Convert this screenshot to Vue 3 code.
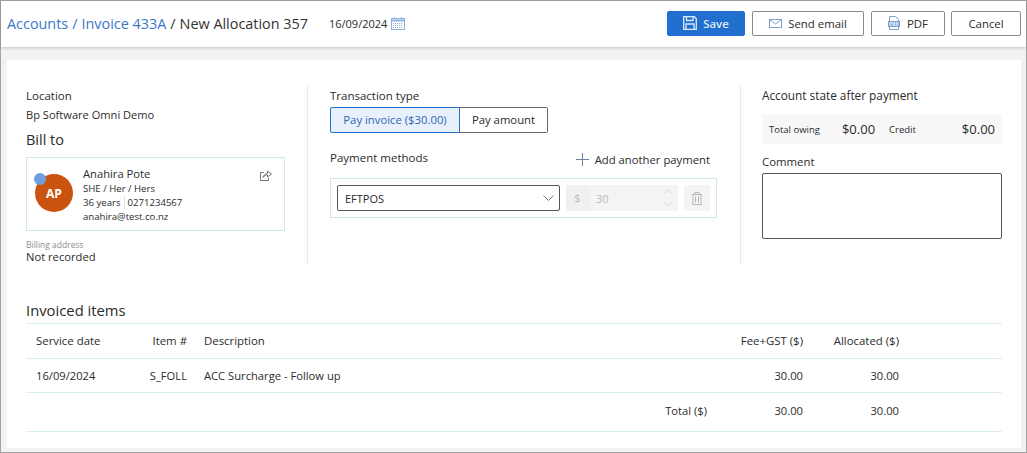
<script setup>
const items = [
  { date: "16/09/2024", code: "S_FOLL", description: "ACC Surcharge - Follow up", fee: "30.00", allocated: "30.00" },
];
</script>

<template>
  <div class="window">
    <header class="topbar">
      <div class="crumbs">
        <a class="crumb-link">Accounts</a>
        <span class="sep">/</span>
        <a class="crumb-link">Invoice 433A</a>
        <span class="sep sep-dark">/</span>
        <span>New Allocation 357</span>
      </div>
      <div class="date">
        <span>16/09/2024</span>
        <svg width="14" height="13" viewBox="0 0 14 13" fill="none" stroke="#8fb0de">
          <rect x="0.500" y="1.500" width="13" height="11" />
          <path d="M0.500 3.500h13" stroke-width="2" />
          <path d="M3.500 0v2M10.500 0v2" />
          <path d="M2 6.500h10M2 8.500h10M2 10.500h10" stroke-dasharray="1 1" />
        </svg>
      </div>
      <div class="actions">
        <button class="btn btn-primary" type="button">
          <svg width="14" height="14" viewBox="0 0 14 14" fill="none" stroke="#dbe8f8" stroke-width="1.300">
            <path d="M.7.700h10.600l2 2v10.600H.7z" />
            <path d="M3.500.700v3.800h6.500V.700M3 13.300V8h8v5.300" />
          </svg>
          <span>Save</span>
        </button>
        <button class="btn btn-email" type="button">
          <svg width="13" height="9" viewBox="0 0 13 9" fill="none" stroke="#7f9fd0">
            <rect x="0.500" y="0.500" width="12" height="8" />
            <path d="M0.500 0.500 6.500 5l6-4.500" />
          </svg>
          <span>Send email</span>
        </button>
        <button class="btn btn-pdf" type="button">
          <svg width="12" height="14" viewBox="0 0 12 14" fill="none" stroke="#7f9fd0">
            <path d="M1.500 5V.5h6l3 3V5M1.500 11v2.500h9V11" />
            <rect x="0.500" y="5.500" width="11" height="5" fill="#a9c1e6" />
            <path d="M2 7h2M5 7h2M8 7h2M2 9h1M5 9h2M8 9h1" stroke="#fff" stroke-width="0.800" />
          </svg>
          <span>PDF</span>
        </button>
        <button class="btn btn-cancel" type="button">Cancel</button>
      </div>
    </header>

    <main class="content">
      <section class="card">
        <div class="columns">
          <div class="col col-left">
            <div class="label">Location</div>
            <div class="location">Bp Software Omni Demo</div>
            <h2 class="bill-title">Bill to</h2>
            <div class="patient">
              <div class="avatar">
                <span class="avatar-dot"></span>
                AP
              </div>
              <div class="patient-info">
                <div class="patient-name">Anahira Pote</div>
                <div class="patient-line">SHE / Her / Hers</div>
                <div class="patient-line">
                  <span class="age">36 years</span><span class="phone">0271234567</span>
                </div>
                <div class="patient-line patient-email">anahira@test.co.nz</div>
              </div>
              <svg class="share" width="12" height="11" viewBox="0 0 12 11" fill="none" stroke="#777">
                <path d="M4 2.500H.5v8h8V8" />
                <path d="M3 7.500C3.500 5 5.500 3.500 7.500 3.500V1l4 3-4 3V5C5.500 5 4 6 3 7.500z" />
              </svg>
            </div>
            <div class="billing-label">Billing address</div>
            <div class="billing-value">Not recorded</div>
          </div>

          <div class="col col-middle">
            <div class="label">Transaction type</div>
            <div class="toggle">
              <span class="toggle-item toggle-active">Pay invoice ($30.00)</span>
              <span class="toggle-item toggle-plain">Pay amount</span>
            </div>
            <div class="methods-head">
              <div class="label">Payment methods</div>
              <div class="add-payment">
                <svg width="13" height="13" viewBox="0 0 13 13" stroke="#6a7fa3" fill="none">
                  <path d="M6.500 0v13M0 6.500h13" />
                </svg>
                <span>Add another payment</span>
              </div>
            </div>
            <div class="method-row">
              <div class="select">
                <span>EFTPOS</span>
                <svg width="11" height="6" viewBox="0 0 11 6" fill="none" stroke="#777">
                  <path d="M0.500 0.500 5.500 5.500l5-5" />
                </svg>
              </div>
              <div class="amount">
                <span class="amount-sign">$</span>
                <span class="amount-value">30</span>
                <svg width="9" height="18" viewBox="0 0 9 18" fill="none" stroke="#d8d8d8">
                  <path d="M1 4.500 4.500 1 8 4.500M1 13.500 4.500 17 8 13.500" />
                </svg>
              </div>
              <div class="trash">
                <svg width="10" height="13" viewBox="0 0 10 13" fill="none" stroke="#b5b5b5">
                  <path d="M0 2.500h10M3 2.500V.5h4v2" />
                  <rect x="1" y="2.500" width="8" height="10" />
                  <path d="M3.500 4.500v6M6.500 4.500v6" />
                </svg>
              </div>
            </div>
          </div>

          <div class="col col-right">
            <div class="label label-wide">Account state after payment</div>
            <div class="state">
              <span class="state-label">Total owing</span>
              <span class="state-value state-owing">$0.00</span>
              <span class="state-label state-credit">Credit</span>
              <span class="state-value state-credit-value">$0.00</span>
            </div>
            <label class="comment-label">Comment</label>
            <div class="comment"></div>
          </div>
        </div>

        <h2 class="items-title">Invoiced items</h2>
        <table class="items">
          <colgroup>
            <col style="width: 90px" />
            <col style="width: 81px" />
            <col style="width: 420px" />
            <col style="width: 100px" />
            <col style="width: 96px" />
            <col style="width: 96px" />
            <col style="width: 93px" />
          </colgroup>
          <thead>
            <tr>
              <th>Service date</th>
              <th class="right">Item #</th>
              <th class="desc">Description</th>
              <th></th>
              <th class="right">Fee+GST ($)</th>
              <th class="right">Allocated ($)</th>
              <th></th>
            </tr>
          </thead>
          <tbody>
            <tr v-for="item in items" :key="item.code">
              <td>{{ item.date }}</td>
              <td class="right">{{ item.code }}</td>
              <td class="desc">{{ item.description }}</td>
              <td></td>
              <td class="right">{{ item.fee }}</td>
              <td class="right">{{ item.allocated }}</td>
              <td></td>
            </tr>
          </tbody>
          <tfoot>
            <tr>
              <td colspan="3"></td>
              <td class="right">Total ($)</td>
              <td class="right">30.00</td>
              <td class="right">30.00</td>
              <td></td>
            </tr>
          </tfoot>
        </table>
      </section>
    </main>
  </div>
</template>

<style>
html,
body {
  margin: 0;
  overflow: hidden;
}
</style>

<style scoped>
.window {
  box-sizing: border-box;
  width: 1027px;
  height: 453px;
  border: 1px solid #a3a3a3;
  background: #f2f2f2;
  font-family: "Open Sans", sans-serif;
  font-size: 11px;
  color: #2b2b2b;
  display: flex;
  flex-direction: column;
}

.topbar {
  height: 46px;
  flex: none;
  background: #fff;
  box-shadow: 0 1px 3px rgba(0, 0, 0, 0.2);
  display: flex;
  align-items: center;
  padding: 0 5px 2px 6px;
  box-sizing: border-box;
}

.crumbs {
  font-size: 14.400px;
  color: #333;
  display: flex;
  gap: 4px;
}

.crumb-link,
.sep {
  color: #3a78c9;
}

.sep-dark {
  color: #333;
}

.date {
  margin-left: 21px;
  display: flex;
  align-items: center;
  gap: 4px;
  font-size: 11px;
}

.actions {
  margin-left: auto;
  display: flex;
  gap: 7px;
}

.btn {
  box-sizing: border-box;
  height: 25px;
  border: 1px solid #8a8a8a;
  border-radius: 2px;
  background: #fff;
  font: 400 11.400px "Open Sans", sans-serif;
  color: #2b2b2b;
  display: flex;
  align-items: center;
  justify-content: center;
  padding: 0;
}

.btn-primary {
  width: 78px;
  background: #2170cf;
  border-color: #2170cf;
  color: #dfeaf8;
  gap: 6px;
  font-weight: 600;
}

.btn-email {
  width: 112px;
  gap: 6px;
}

.btn-pdf {
  width: 74px;
  gap: 7px;
}

.btn-cancel {
  width: 70px;
  margin-left: -1px;
}

.content {
  flex: 1;
  padding: 13px 5px 4px 6px;
  min-height: 0;
}

.card {
  box-sizing: border-box;
  height: 100%;
  background: #fff;
  padding: 25px 19px 0;
}

.columns {
  display: flex;
  height: 179px;
}

.col {
  box-sizing: border-box;
  padding-top: 3px;
}

.col-left {
  width: 282px;
  padding-right: 22px;
  border-right: 1px solid #dcefef;
}

.col-middle {
  width: 433px;
  padding-left: 22px;
  padding-right: 23px;
  border-right: 1px solid #dcefef;
}

.col-right {
  flex: 1;
  padding-left: 21px;
}

.label {
  line-height: 15px;
  font-weight: 500;
  color: #2b2b2b;
  font-size: 11.500px;
}

.label-wide {
  font-size: 11.800px;
}

.location {
  margin-top: 4px;
  line-height: 15px;
  font-size: 11.100px;
}

.bill-title {
  margin: 8px 0 0;
  font-size: 14.500px;
  line-height: 20px;
  font-weight: 500;
}

.patient {
  margin-top: 7px;
  height: 74px;
  box-sizing: border-box;
  border: 1px solid #cfe8e8;
  display: flex;
  padding: 8px 12px 0 8px;
}

.avatar {
  position: relative;
  flex: none;
  width: 38px;
  height: 38px;
  margin-top: 8px;
  border-radius: 50%;
  background: #cb5310;
  color: #fff;
  font-size: 12px;
  font-weight: 700;
  display: flex;
  align-items: center;
  justify-content: center;
}

.avatar-dot {
  position: absolute;
  top: -1px;
  left: -1px;
  width: 12px;
  height: 12px;
  border-radius: 50%;
  background: #6d9fdd;
}

.patient-info {
  margin-left: 10px;
  flex: 1;
}

.patient-name {
  font-size: 11.200px;
  line-height: 16px;
}

.patient-line {
  font-size: 9.600px;
  line-height: 13.500px;
}

.patient-email {
  line-height: 16px;
}

.age {
  padding-right: 4px;
  border-right: 1px solid #d5e6e6;
  margin-right: 2px;
}

.share {
  margin-top: 4px;
}

.billing-label {
  margin-top: 8px;
  font-size: 8.500px;
  line-height: 11px;
  color: #8f8f8f;
}

.billing-value {
  font-size: 11.200px;
  line-height: 15px;
  margin-top: -1px;
}

.toggle {
  margin-top: 4px;
  display: flex;
  width: 218px;
  height: 26px;
  box-sizing: border-box;
}

.toggle-item {
  box-sizing: border-box;
  display: flex;
  align-items: center;
  justify-content: center;
  font-size: 11.300px;
  padding-bottom: 1px;
}

.toggle-active {
  width: 130px;
  background: #e8f0fb;
  color: #2f67b2;
  border: 1px solid #2170cf;
  border-radius: 2px 0 0 2px;
}

.toggle-plain {
  flex: 1;
  border: 1px solid #666;
  border-left: none;
  border-radius: 0 2px 2px 0;
}

.methods-head {
  display: flex;
  justify-content: space-between;
  align-items: center;
  margin-top: 17px;
  height: 19px;
}

.methods-head .label {
  margin-top: -5px;
}

.add-payment {
  display: flex;
  align-items: center;
  gap: 6px;
  margin-right: 7px;
  font-size: 11.300px;
}

.method-row {
  margin-top: 9px;
  height: 40px;
  box-sizing: border-box;
  border: 1px solid #cfe8e8;
  display: flex;
  align-items: center;
  padding: 0 6px;
  gap: 6px;
}

.select {
  box-sizing: border-box;
  width: 223px;
  height: 26px;
  border: 1px solid #555;
  border-radius: 2px;
  display: flex;
  align-items: center;
  justify-content: space-between;
  padding: 0 5px 0 7px;
  font-size: 11px;
}

.amount {
  box-sizing: border-box;
  width: 112px;
  height: 26px;
  background: #f4f4f4;
  border-radius: 2px;
  display: flex;
  align-items: center;
  color: #bbb;
  font-size: 11px;
  padding-right: 6px;
}

.amount-sign {
  width: 23px;
  text-align: center;
  background: #f0f0f0;
  line-height: 26px;
}

.amount-value {
  flex: 1;
  padding-left: 7px;
}

.trash {
  width: 26px;
  height: 26px;
  background: #f4f4f4;
  border-radius: 2px;
  display: flex;
  align-items: center;
  justify-content: center;
}

.state {
  margin-top: 11px;
  height: 30px;
  background: #f7f7f7;
  display: flex;
  align-items: center;
  padding: 0 7px;
}

.state-label {
  font-size: 9.500px;
}

.state-value {
  font-size: 13px;
  font-weight: 500;
}

.state-owing {
  margin-left: 22px;
}

.state-credit {
  margin-left: 14px;
}

.state-credit-value {
  margin-left: auto;
}

.comment-label {
  display: block;
  margin-top: 10px;
  font-size: 11.400px;
  font-weight: 500;
  line-height: 15px;
}

.comment {
  margin-top: 4px;
  box-sizing: border-box;
  height: 66px;
  border: 1px solid #555;
  border-radius: 2px;
}

.items-title {
  margin: 0;
  padding-top: 37px;
  font-size: 14.800px;
  line-height: 19px;
  font-weight: 500;
}

.items {
  margin-top: 3px;
  width: 976px;
  table-layout: fixed;
  border-collapse: collapse;
  border-top: 1px solid #dcefef;
  font-size: 11.200px;
}

.items th,
.items td {
  padding: 0 10px;
  text-align: left;
  border-bottom: 1px solid #dcefef;
}

.items th {
  height: 33px;
  font-weight: 500;
  font-size: 11.400px;
  color: #2b2b2b;
  padding-bottom: 1px;
}

.items tbody td {
  height: 33px;
}

.items tfoot td {
  height: 35px;
  font-weight: 500;
  padding-bottom: 3px;
}

.items .right {
  text-align: right;
}

.items .desc {
  padding-left: 7px;
}
</style>
